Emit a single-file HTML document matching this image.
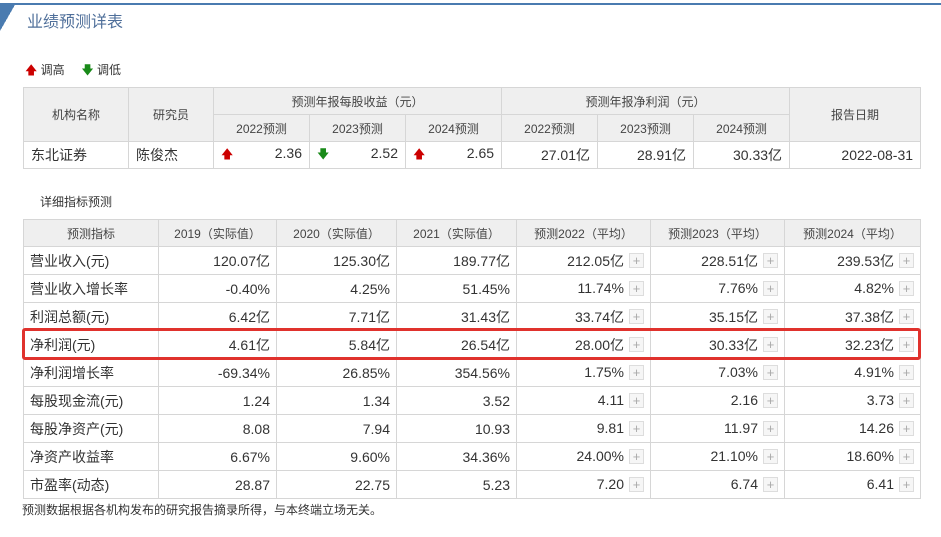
<!DOCTYPE html>
<html><head><meta charset="utf-8"><style>
*{margin:0;padding:0;box-sizing:border-box}
body{width:941px;height:537px;background:#fff;position:relative;overflow:hidden;font-family:"Liberation Sans","Noto Sans CJK SC",sans-serif;color:#333}
.topline{position:absolute;left:8px;top:3px;right:0;height:2px;background:#4a7bb0}
.tri2{position:absolute;left:0;top:3px;width:16px;height:28px;background:linear-gradient(to bottom right,#4a7bb0 50%,transparent 50%)}
.title{position:absolute;left:27px;top:8px;font-size:16px;color:#4f6f9a}
table{position:absolute;border-collapse:collapse;table-layout:fixed;font-size:14px}
td,th{border:1px solid #d6d6d6;height:27px;padding:0 7px;white-space:nowrap;vertical-align:middle}
th{background:#efefef;font-weight:normal;font-size:12px;color:#444;text-align:center}
td{text-align:right}
td.l{text-align:left}
.up{color:#c00;font-size:12px;float:left}
.dn{color:#198a19;font-size:12px;float:left}
.pl{display:inline-block;width:15px;height:15px;border:1px solid #ddd;background:#f6f6f6;color:#aaa;font-size:13px;line-height:13px;text-align:center;vertical-align:middle;margin-left:5px;position:relative;top:-1px}
#t2 td{height:28px;padding:0 6px}
.legend{position:absolute;left:25px;top:61px;font-size:12px}
.red{position:absolute;left:22px;top:328px;width:899px;height:32px;border:3px solid #e0322d;border-radius:3px}
</style></head><body>
<div class="topline"></div><div class="tri2"></div>
<div class="title">业绩预测详表</div>
<div class="legend"><span style="color:#c00">🡅</span> 调高 &nbsp;&nbsp;&nbsp;&nbsp;<span style="color:#198a19">🡇</span> 调低</div>
<table style="left:23px;top:87px;width:897px">
<colgroup><col style="width:105px"><col style="width:85px"><col style="width:96px"><col style="width:96px"><col style="width:96px"><col style="width:96px"><col style="width:96px"><col style="width:96px"><col style="width:131px"></colgroup>
<tr><th rowspan="2">机构名称</th><th rowspan="2">研究员</th><th colspan="3">预测年报每股收益（元）</th><th colspan="3">预测年报净利润（元）</th><th rowspan="2">报告日期</th></tr>
<tr><th>2022预测</th><th>2023预测</th><th>2024预测</th><th>2022预测</th><th>2023预测</th><th>2024预测</th></tr>
<tr><td class="l">东北证券</td><td class="l">陈俊杰</td><td><span class="up">🡅</span>2.36</td><td><span class="dn">🡇</span>2.52</td><td><span class="up">🡅</span>2.65</td><td>27.01亿</td><td>28.91亿</td><td>30.33亿</td><td>2022-08-31</td></tr>
</table>
<div style="position:absolute;left:40px;top:193px;font-size:12px">详细指标预测</div>
<table id="t2" style="left:23px;top:219px;width:897px">
<colgroup><col style="width:135px"><col style="width:118px"><col style="width:120px"><col style="width:120px"><col style="width:134px"><col style="width:134px"><col style="width:136px"></colgroup>
<tr><th>预测指标</th><th>2019（实际值）</th><th>2020（实际值）</th><th>2021（实际值）</th><th>预测2022（平均）</th><th>预测2023（平均）</th><th>预测2024（平均）</th></tr>
<tr><td class="l">营业收入(元)</td><td>120.07亿</td><td>125.30亿</td><td>189.77亿</td><td>212.05亿<span class="pl">+</span></td><td>228.51亿<span class="pl">+</span></td><td>239.53亿<span class="pl">+</span></td></tr>
<tr><td class="l">营业收入增长率</td><td>-0.40%</td><td>4.25%</td><td>51.45%</td><td>11.74%<span class="pl">+</span></td><td>7.76%<span class="pl">+</span></td><td>4.82%<span class="pl">+</span></td></tr>
<tr><td class="l">利润总额(元)</td><td>6.42亿</td><td>7.71亿</td><td>31.43亿</td><td>33.74亿<span class="pl">+</span></td><td>35.15亿<span class="pl">+</span></td><td>37.38亿<span class="pl">+</span></td></tr>
<tr><td class="l">净利润(元)</td><td>4.61亿</td><td>5.84亿</td><td>26.54亿</td><td>28.00亿<span class="pl">+</span></td><td>30.33亿<span class="pl">+</span></td><td>32.23亿<span class="pl">+</span></td></tr>
<tr><td class="l">净利润增长率</td><td>-69.34%</td><td>26.85%</td><td>354.56%</td><td>1.75%<span class="pl">+</span></td><td>7.03%<span class="pl">+</span></td><td>4.91%<span class="pl">+</span></td></tr>
<tr><td class="l">每股现金流(元)</td><td>1.24</td><td>1.34</td><td>3.52</td><td>4.11<span class="pl">+</span></td><td>2.16<span class="pl">+</span></td><td>3.73<span class="pl">+</span></td></tr>
<tr><td class="l">每股净资产(元)</td><td>8.08</td><td>7.94</td><td>10.93</td><td>9.81<span class="pl">+</span></td><td>11.97<span class="pl">+</span></td><td>14.26<span class="pl">+</span></td></tr>
<tr><td class="l">净资产收益率</td><td>6.67%</td><td>9.60%</td><td>34.36%</td><td>24.00%<span class="pl">+</span></td><td>21.10%<span class="pl">+</span></td><td>18.60%<span class="pl">+</span></td></tr>
<tr><td class="l">市盈率(动态)</td><td>28.87</td><td>22.75</td><td>5.23</td><td>7.20<span class="pl">+</span></td><td>6.74<span class="pl">+</span></td><td>6.41<span class="pl">+</span></td></tr>
</table>
<div class="red"></div>
<div style="position:absolute;left:22px;top:501px;font-size:12px">预测数据根据各机构发布的研究报告摘录所得，与本终端立场无关。</div>
</body></html>
